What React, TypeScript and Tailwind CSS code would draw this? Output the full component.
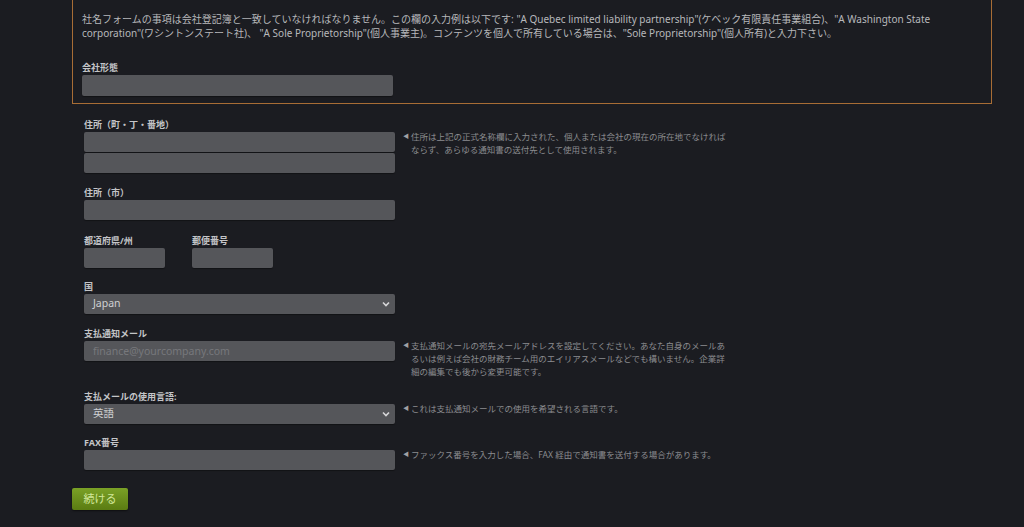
import React from "react";

const font = { fontFamily: '"Noto Sans", "Noto Sans CJK JP", sans-serif' };

const Label = ({ children, className = "" }: { children: React.ReactNode; className?: string }) => (
	<p className={`text-[9px] leading-[12px] font-bold text-[#c4c5c8] mb-[1px] ${className}`}>{children}</p>
);

const Input = ({ className = "w-[311px]", placeholder }: { className?: string; placeholder?: string }) => (
	<input
		placeholder={placeholder}
		className={`${className} h-[20px] block rounded-[2px] bg-[#55565a] px-[9px] text-[10.5px] text-[#d0d0d2] placeholder:text-[#77787c] outline-none shadow-[0_1px_1px_rgba(0,0,0,0.35)]`}
		style={font}
	/>
);

const Select = ({ value }: { value: string }) => (
	<div className="relative w-[311px] h-[20px] rounded-[2px] bg-[#55565a] shadow-[0_1px_1px_rgba(0,0,0,0.35)] flex items-center pl-[9px]">
		<span className="text-[10.5px] text-[#cfd0d2]">{value}</span>
		<svg className="absolute right-[5px] top-[7px]" width="8" height="6" viewBox="0 0 8 6">
			<path d="M1 1.5 L4 4.5 L7 1.5" fill="none" stroke="#d6d6d8" strokeWidth="1.6" />
		</svg>
	</div>
);

const Help = ({ children }: { children: React.ReactNode }) => (
	<div className="ml-[8px] -mt-[2px] flex text-[8.5px] leading-[13px] text-[#8b8c90]">
		<span className="mr-[2px] text-[6px] leading-[13px] text-[#a0a1a4]">◀</span>
		<p>{children}</p>
	</div>
);

export default function App() {
	return (
		<div className="min-h-[527px] bg-[#1b1c21] overflow-hidden" style={font}>
			<div className="ml-[72px] w-[920px] border-x border-b border-[#a86d35] px-[9px] pt-[12px] pb-[7px]">
				<p className="text-[10px] leading-[14px] text-[#b7b8bb]">
					社名フォームの事項は会社登記簿と一致していなければなりません。この欄の入力例は以下です: "A Quebec limited liability partnership"(ケベック有限責任事業組合)、"A Washington State
					<br />
					corporation"(ワシントンステート社)、 "A Sole Proprietorship"(個人事業主)。コンテンツを個人で所有している場合は、"Sole Proprietorship"(個人所有)と入力下さい。
				</p>
				<Label className="mt-[22px]">会社形態</Label>
				<Input className="w-[311px] !h-[21px]" />
			</div>

			<div className="ml-[84px]">
				<Label className="mt-[15px]">住所（町・丁・番地）</Label>
				<div className="flex">
					<div>
						<Input />
						<div className="mt-[1px]">
							<Input />
						</div>
					</div>
					<Help>
						住所は上記の正式名称欄に入力された、個人または会社の現在の所在地でなければ
						<br />
						ならず、あらゆる通知書の送付先として使用されます。
					</Help>
				</div>

				<Label className="mt-[14px]">住所（市）</Label>
				<Input />

				<div className="mt-[15px] flex gap-[27px]">
					<div>
						<Label>都道府県/州</Label>
						<Input className="w-[81px]" />
					</div>
					<div>
						<Label>郵便番号</Label>
						<Input className="w-[81px]" />
					</div>
				</div>

				<Label className="mt-[13px]">国</Label>
				<Select value="Japan" />

				<Label className="mt-[14px]">支払通知メール</Label>
				<div className="flex">
					<Input placeholder="finance@yourcompany.com" />
					<Help>
						支払通知メールの宛先メールアドレスを設定してください。あなた自身のメールあ
						<br />
						るいは例えば会社の財務チーム用のエイリアスメールなどでも構いません。企業詳
						<br />
						細の編集でも後から変更可能です。
					</Help>
				</div>

				<Label className="mt-[13px]">支払メールの使用言語:</Label>
				<div className="flex">
					<Select value="英語" />
					<Help>これは支払通知メールでの使用を希望される言語です。</Help>
				</div>

				<Label className="mt-[13px]">FAX番号</Label>
				<div className="flex">
					<Input />
					<Help>ファックス番号を入力した場合、FAX 経由で通知書を送付する場合があります。</Help>
				</div>
			</div>

			<button className="ml-[72px] mt-[18px] h-[22px] w-[56px] rounded-[2px] bg-gradient-to-b from-[#7aa126] to-[#5b7c12] text-[11px] text-[#d2e89a] shadow-[0_1px_2px_rgba(0,0,0,0.5)]">
				続ける
			</button>
		</div>
	);
}
